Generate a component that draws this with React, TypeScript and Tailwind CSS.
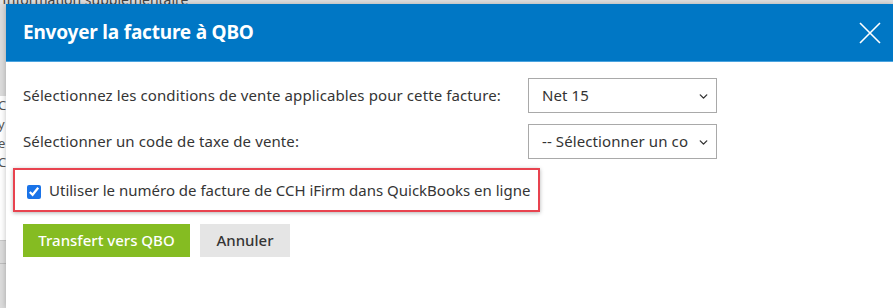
import { ChevronDown } from 'lucide-react'

function Select({ value }: { value: string }) {
    return (
        <div className="relative w-[189px] h-[35px] border border-[#a9a9a9] bg-white flex items-center pl-[13px] pr-[28px] overflow-hidden">
            <span className="text-[15px] text-[#333] whitespace-nowrap overflow-hidden">{value}</span>
            <ChevronDown className="absolute right-[6px] top-[11px] w-[13px] h-[13px] text-[#333]" strokeWidth={2.5} />
        </div>
    )
}

export default function App() {
    return (
        <div className="relative w-[893px] h-[308px] overflow-hidden bg-white font-['Noto_Sans',sans-serif]">
            {/* page behind the dialog */}
            <div className="absolute inset-x-0 top-0 h-[4px] bg-[#e2e2e2] overflow-hidden">
                <span className="absolute left-[2px] -top-[11px] text-[14px] text-[#444] whitespace-nowrap">Information supplémentaire</span>
            </div>
            <div className="absolute left-0 top-[4px] w-[6px] h-[92px] bg-[#dcdcdc]" />
            <div className="absolute left-0 top-[96px] w-[6px] h-[76px] text-[13px] leading-[19px] text-[#555] overflow-hidden">
                <div className="-ml-[2px]">C</div>
                <div className="-ml-[2px]">y</div>
                <div className="-ml-[2px]">e</div>
                <div className="-ml-[2px]">C</div>
            </div>
            <div className="absolute left-0 top-[240px] w-[6px] h-[68px] bg-[#dcdcdc] border-t border-[#c8c8c8]">
                <div className="mt-[22px] border-t border-[#bdbdbd]" />
            </div>

            {/* dialog */}
            <div className="absolute left-[6px] top-[4px] right-0 bottom-0 bg-white shadow-[0_0_6px_rgba(0,0,0,0.25)]">
                <div className="h-[58px] bg-[#0077c5] border-b border-[#4aa3df] flex items-center justify-between pl-[17px] pr-[12px]">
                    <h1 className="text-[19px] font-bold text-white tracking-[-0.2px]">Envoyer la facture à QBO</h1>
                    <svg width="22" height="22" viewBox="0 0 22 22" className="text-white">
                        <path d="M1 1 L21 21 M21 1 L1 21" stroke="currentColor" strokeWidth="1.6" />
                    </svg>
                </div>

                <div className="pl-[17px] pt-[16px]">
                    <div className="grid grid-cols-[505px_189px] gap-y-[11px] items-center text-[15px] text-[#353535] tracking-[0.1px]">
                        <span>Sélectionnez les conditions de vente applicables pour cette facture:</span>
                        <Select value="Net 15" />
                        <span>Sélectionner un code de taxe de vente:</span>
                        <Select value="-- Sélectionner un code de taxe --" />
                    </div>

                    <div className="-ml-[10px] mt-[9px] w-[527px] h-[44px] border-2 border-[#e8434f] shadow-[0_1px_4px_rgba(0,0,0,0.3)] flex items-center pl-[12px] gap-[8px]">
                        <input type="checkbox" defaultChecked className="w-[14px] h-[14px] accent-[#1a73e8] mt-[3px]" />
                        <span className="text-[15px] text-[#353535] whitespace-nowrap">Utiliser le numéro de facture de CCH iFirm dans QuickBooks en ligne</span>
                    </div>

                    <div className="flex gap-[10px] mt-[12px]">
                        <button className="h-[33px] w-[167px] bg-[#85bc22] text-white text-[15px] font-medium">Transfert vers QBO</button>
                        <button className="h-[33px] w-[90px] bg-[#e5e5e5] text-[#353535] text-[15px] font-medium">Annuler</button>
                    </div>
                </div>
            </div>
        </div>
    )
}
